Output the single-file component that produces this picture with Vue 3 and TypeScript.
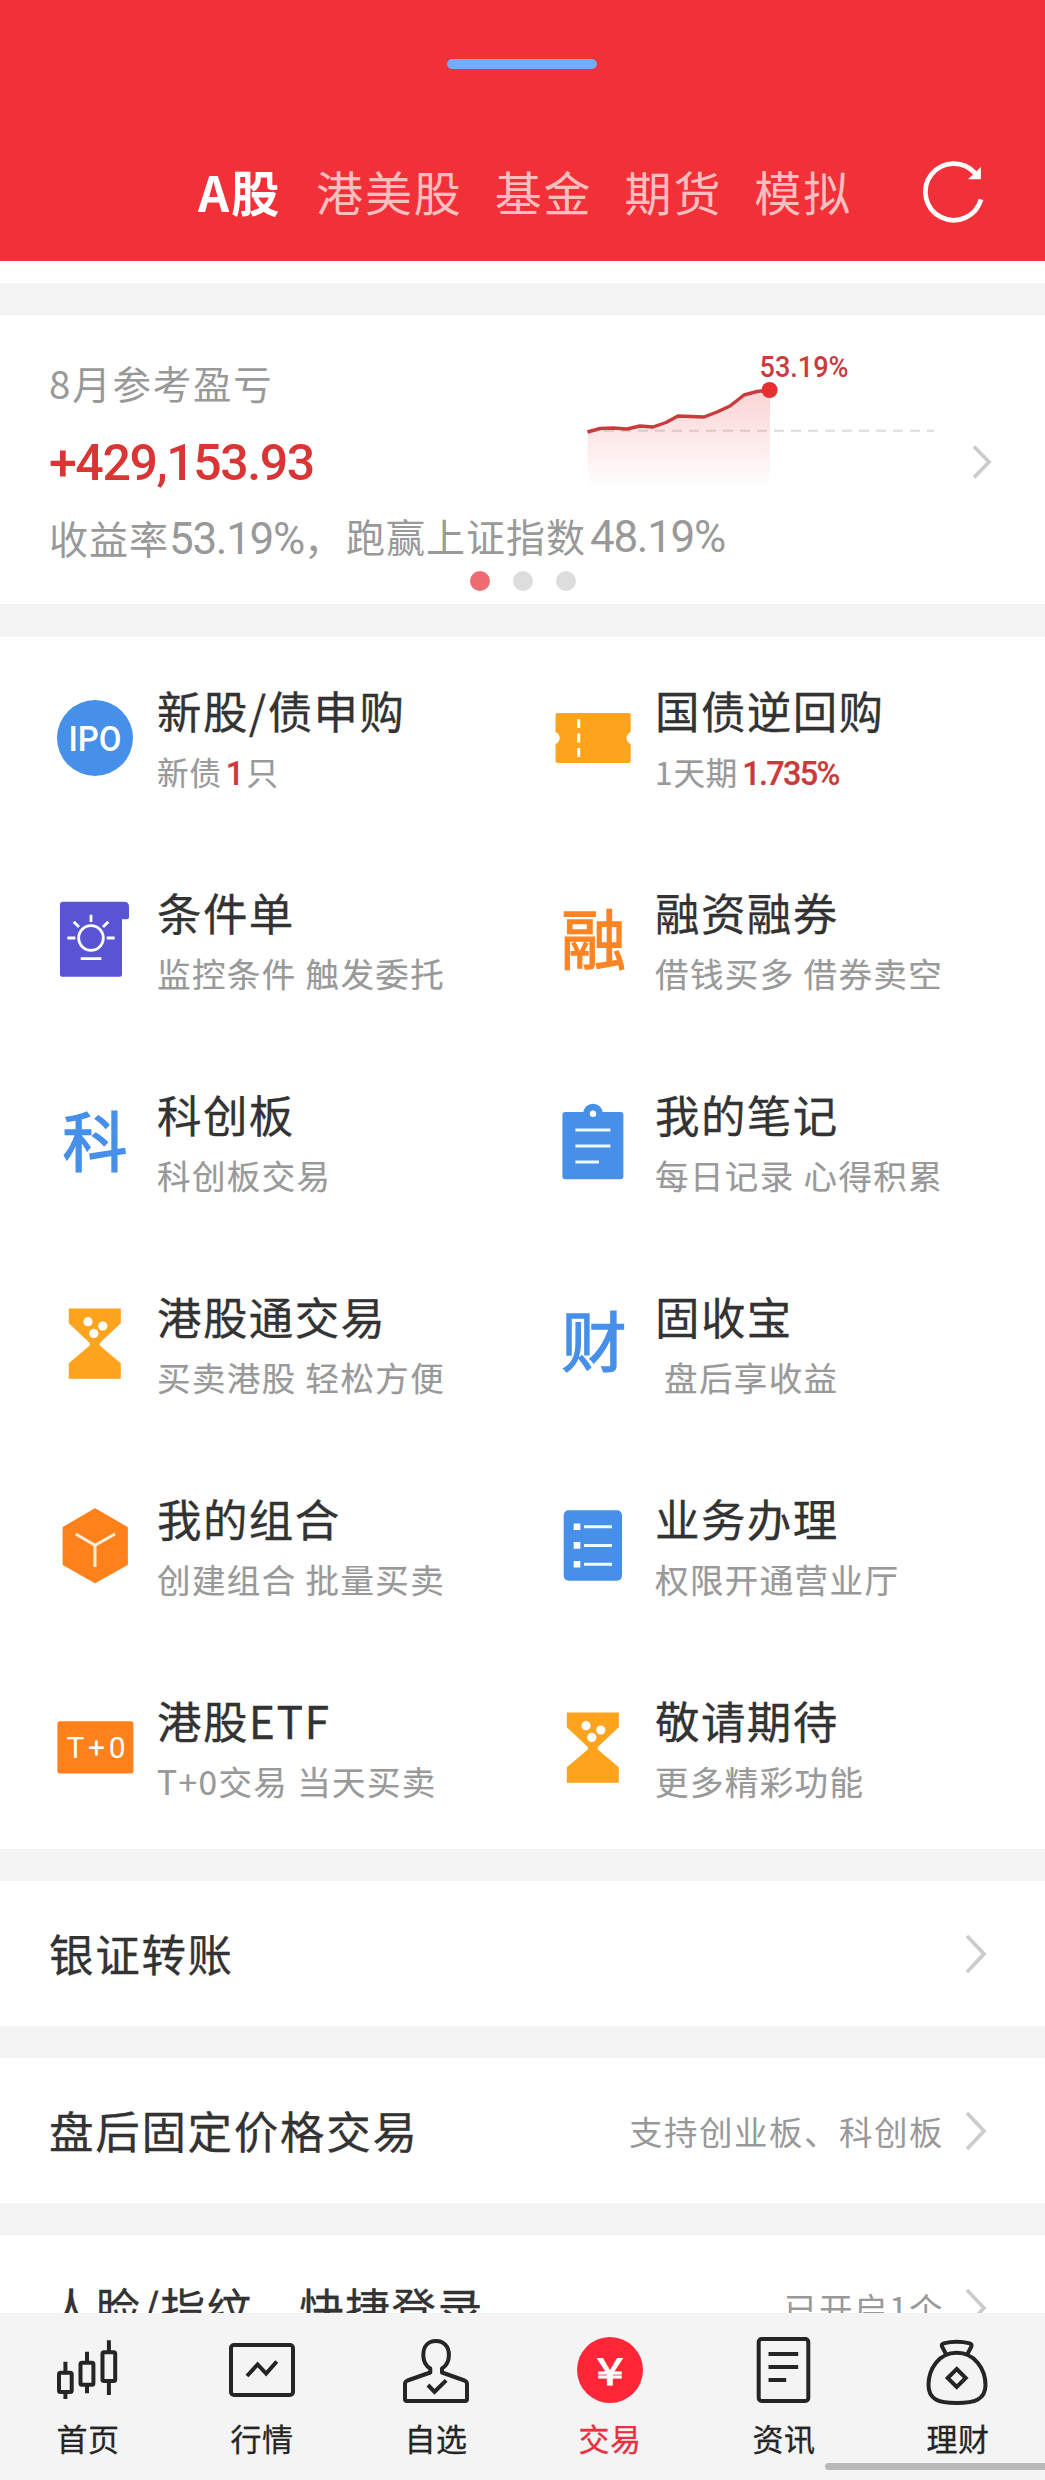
<script setup lang="ts">
interface Entry {
  icon: string
  title: string
  sub: string
  value?: string
  tail?: string
  indent?: boolean
}

interface Row {
  title: string
  note?: string
}

interface NavItem {
  icon: string
  label: string
  active?: boolean
}

const tabs: string[] = ['A股', '港美股', '基金', '期货', '模拟']

const entries: Entry[] = [
  { icon: 'ipo', title: '新股/债申购', sub: '新债', value: '1', tail: '只' },
  { icon: 'ticket', title: '国债逆回购', sub: '1天期', value: '1.735%' },
  { icon: 'bulb', title: '条件单', sub: '监控条件 触发委托' },
  { icon: 'rong', title: '融资融券', sub: '借钱买多 借券卖空' },
  { icon: 'ke', title: '科创板', sub: '科创板交易' },
  { icon: 'note', title: '我的笔记', sub: '每日记录 心得积累' },
  { icon: 'glass', title: '港股通交易', sub: '买卖港股 轻松方便' },
  { icon: 'cai', title: '固收宝', sub: '盘后享收益', indent: true },
  { icon: 'cube', title: '我的组合', sub: '创建组合 批量买卖' },
  { icon: 'list', title: '业务办理', sub: '权限开通营业厅' },
  { icon: 't0', title: '港股ETF', sub: 'T+0交易 当天买卖' },
  { icon: 'glass', title: '敬请期待', sub: '更多精彩功能' },
]

const rows: Row[] = [
  { title: '银证转账' },
  { title: '盘后固定价格交易', note: '支持创业板、科创板' },
  { title: '人脸/指纹、快捷登录', note: '已开启1个' },
]

const nav: NavItem[] = [
  { icon: 'home', label: '首页' },
  { icon: 'quote', label: '行情' },
  { icon: 'self', label: '自选' },
  { icon: 'trade', label: '交易', active: true },
  { icon: 'news', label: '资讯' },
  { icon: 'wealth', label: '理财' },
]

const curve =
  'M1.5 84 L14 80.5 L27 80 L41 81 L54 78 L67 79 L80 74.5 L92 68 L118 69 L131 64 L144 58 L158 47 L171 43.5 L184 42'
</script>

<template>
  <div class="page">
    <header class="top">
      <span class="handle"></span>
      <nav class="tabs">
        <span v-for="(t, i) in tabs" :key="t" class="tab" :class="{ on: i === 0 }">{{ t }}</span>
      </nav>
      <svg class="refresh" viewBox="0 0 70 70" fill="none">
        <path d="M56 15.2 A28.3 28.3 0 1 0 62 41.4" stroke="#fff" stroke-width="4.8" />
        <path d="M61.9 9 V21.2 H49 Z" fill="#fff" />
      </svg>
    </header>

    <section class="profit">
      <div class="figures">
        <p class="label">8月参考盈亏</p>
        <p class="amount">+429,153.93</p>
        <p class="summary">
          <span>收益率<b class="num rate">53.19%</b>，</span><span class="beat">跑赢上证指数<b class="num idx">48.19%</b></span>
        </p>
      </div>
      <svg class="chart" viewBox="0 0 350 160">
        <defs>
          <linearGradient id="area" x1="0" y1="0" x2="0" y2="1">
            <stop offset="0" stop-color="#e93a3a" stop-opacity="0.22" />
            <stop offset="1" stop-color="#e93a3a" stop-opacity="0" />
          </linearGradient>
        </defs>
        <path d="M1 82.8 H348" stroke="#dcdcdc" stroke-width="2" stroke-dasharray="10 7" />
        <path :d="curve + ' V141 H1.5 Z'" fill="url(#area)" />
        <path :d="curve" fill="none" stroke="#cb3a3c" stroke-width="3.4" stroke-linejoin="round" />
        <circle cx="183.6" cy="42" r="8" fill="#e72f31" />
        <text x="173.5" y="29" class="tip" textLength="89" lengthAdjust="spacingAndGlyphs">53.19%</text>
      </svg>
      <svg class="go" viewBox="0 0 20 36"><path d="M2 2.5 L17 18 L2 33.5" /></svg>
      <div class="dots"><i class="on"></i><i></i><i></i></div>
    </section>

    <section class="grid">
      <div v-for="e in entries" :key="e.title" class="cell">
        <svg class="icon" viewBox="0 0 80 80" fill="none">
          <template v-if="e.icon === 'ipo'">
            <circle cx="40" cy="40" r="38" fill="#4690ea" />
            <text x="13.5" y="52.5" class="latin" font-size="35" font-weight="500" textLength="53" lengthAdjust="spacingAndGlyphs">IPO</text>
          </template>
          <template v-else-if="e.icon === 'ticket'">
            <path d="M4.5 15 H75.7 Q77.7 15 77.7 17 V34 Q73.5 36 73.5 40 Q73.5 44 77.7 46 V63 Q77.7 65 75.7 65 H4.5 Q2.5 65 2.5 63 V46 Q6.7 44 6.7 40 Q6.7 36 2.5 34 V17 Q2.5 15 4.5 15 Z" fill="#fea31e" />
            <path d="M25.7 21 v9 M25.7 35.5 v9 M25.7 50 v9" stroke="#fff" stroke-width="3" />
          </template>
          <template v-else-if="e.icon === 'bulb'">
            <path d="M8 1.7 H69 Q74 1.7 74 6.7 V17.3 Q74 19.3 72 19.3 H67 V74.7 Q67 76.7 65 76.7 H7 Q5 76.7 5 74.7 V4.7 Q5 1.7 8 1.7 Z" fill="#5854d3" />
            <g stroke="#fff" stroke-width="2.8">
              <circle cx="36" cy="38" r="12.3" />
              <path d="M36 14.7 v7.3 M18.7 21.7 L24 27 M53.3 21.7 L48 27 M12.4 38 h8 M51.7 38 h8 M25.7 58.7 h20.7" />
            </g>
          </template>
          <template v-else-if="e.icon === 'rong'">
            <text x="40.5" y="64" class="glyph orange">融</text>
          </template>
          <template v-else-if="e.icon === 'ke'">
            <text x="40" y="64" class="glyph blue">科</text>
          </template>
          <template v-else-if="e.icon === 'cai'">
            <text x="41" y="62" class="glyph blue">财</text>
          </template>
          <template v-else-if="e.icon === 'note'">
            <rect x="9.4" y="10" width="61" height="67.3" rx="3" fill="#4690ea" />
            <circle cx="40" cy="11.5" r="9.8" fill="#4690ea" />
            <circle cx="40" cy="11.7" r="3.2" fill="#fff" />
            <path d="M22.4 28 h35 M22.4 44 h35 M22.4 60 h23.6" stroke="#eefaff" stroke-width="3" />
          </template>
          <template v-else-if="e.icon === 'glass'">
            <path d="M13.8 4.5 H65.8 V19.3 L44.8 39 V41.5 L65.8 59.3 V74.7 H13.8 V59.3 L34.8 41.5 V39 L13.8 19.3 Z" fill="#fea31e" />
            <g fill="#fff">
              <circle cx="33" cy="17.7" r="4.6" />
              <circle cx="47.8" cy="22" r="4.6" />
              <circle cx="38.8" cy="29.4" r="4.6" />
            </g>
          </template>
          <template v-else-if="e.icon === 'cube'">
            <path d="M40 3.5 L71.7 21.8 V58.3 L40 76 L8.8 58.3 V21.8 Z" fill="#ff811b" stroke="#ff811b" stroke-width="2.4" stroke-linejoin="round" />
            <path d="M20.7 28 L40 39.3 L60 28 M40 39.3 V61" stroke="#fff0dc" stroke-width="3" />
          </template>
          <template v-else-if="e.icon === 'list'">
            <rect x="10.7" y="4.3" width="58.3" height="70.4" rx="5" fill="#4690ea" />
            <path d="M20.7 20.7 h6.6 M20.7 39.4 h6.6 M20.7 58.3 h6.6" stroke="#fff" stroke-width="6.6" />
            <path d="M31 20.7 h28 M31 39.4 h28 M31 58.3 h28" stroke="#eefaff" stroke-width="3" />
          </template>
          <template v-else>
            <rect x="2.4" y="13.3" width="76" height="52.2" rx="2.5" fill="#ff811b" />
            <text x="11.5" y="49.7" class="latin" font-size="30" textLength="59" lengthAdjust="spacing">T+0</text>
          </template>
        </svg>
        <div class="words">
          <h3>{{ e.title }}</h3>
          <p :class="{ indent: e.indent, quote: e.value }">{{ e.sub }}<b v-if="e.value">{{ e.value }}</b>{{ e.tail }}</p>
        </div>
      </div>
    </section>

    <section v-for="r in rows" :key="r.title" class="row">
      <span class="row-title">{{ r.title }}</span>
      <span class="row-note">{{ r.note }}</span>
      <svg class="chev" viewBox="0 0 24 42"><path d="M3 3 L20 21 L3 39" /></svg>
    </section>

    <footer class="bar">
      <div v-for="n in nav" :key="n.label" class="item" :class="{ active: n.active }">
        <svg class="nav-icon" viewBox="0 0 70 70" fill="none" stroke="#252525" stroke-width="4">
          <template v-if="n.icon === 'home'">
            <rect x="6" y="37.7" width="12.7" height="19.3" rx="1.5" />
            <rect x="27.5" y="27.7" width="12.9" height="22" rx="1.5" />
            <rect x="49.5" y="17.3" width="12.7" height="28.7" rx="1.5" />
            <path d="M12.4 26.7 v10 M12.4 57 v7 M34 16.7 v10 M34 50 v8.3 M55.9 5.3 v11 M55.9 47 v13" />
          </template>
          <template v-else-if="n.icon === 'quote'">
            <rect x="4" y="10" width="62" height="50" rx="3" />
            <path d="M20 41 L30.6 29.5 L39.1 38.5 L49.8 26.5" />
          </template>
          <template v-else-if="n.icon === 'self'">
            <path d="M29.3 33.5 C25 31 22.3 27 22.3 20 C22.3 11 27.5 6 35 6 C42.5 6 47.9 11 47.9 20 C47.9 27 45 31 41 33.5 V37.5 L63.5 45.5 Q66 46.5 66 49 V64 Q66 66 64 66 H6 Q4 66 4 64 V49 Q4 46.5 6.5 45.5 L29.3 37.5 Z" stroke-linejoin="round" />
            <path d="M27 50 L33.5 56.8 L45.2 45.4" />
          </template>
          <template v-else-if="n.icon === 'trade'">
            <circle cx="35" cy="35" r="33" fill="#ff2638" stroke="none" />
            <text x="35" y="49.5" class="yen" textLength="27" lengthAdjust="spacingAndGlyphs">¥</text>
          </template>
          <template v-else-if="n.icon === 'news'">
            <rect x="9.7" y="4" width="49.6" height="62" rx="3" />
            <path d="M19.5 19 h29.7 M19.5 32 h29.7 M19.5 45 h17.7" />
          </template>
          <template v-else>
            <path d="M23.2 19.5 L19 11.5 Q18.3 9.2 20.7 8.4 Q33.7 5.3 46.7 8.4 Q49.1 9.2 48.4 11.5 L44.2 19.5" />
            <path d="M33.7 17.8 C15.7 17.8 5.5 34 5.5 50 C5.5 64.5 15.7 68 33.7 68 C51.7 68 62.5 64.5 62.5 50 C62.5 34 51.7 17.8 33.7 17.8 Z" />
            <path d="M33.7 34 L42.7 43 L33.7 52 L24.7 43 Z" />
          </template>
        </svg>
        <span class="nav-label">{{ n.label }}</span>
      </div>
      <i class="home-line"></i>
    </footer>
  </div>
</template>

<style>
body {
  margin: 0;
  background: #f4f4f4;
}
</style>

<style scoped>
.page {
  position: relative;
  width: 1045px;
  height: 2480px;
  overflow: hidden;
  background: #f4f4f4;
  font-family: 'Noto Sans CJK SC', 'Noto Sans', sans-serif;
  color: #333;
}

p,
h3 {
  margin: 0;
  font-weight: 400;
  white-space: nowrap;
}

svg {
  overflow: visible;
}

.top {
  position: relative;
  box-sizing: border-box;
  height: 283px;
  padding: 151px 61px 0 198px;
  display: flex;
  justify-content: space-between;
  align-items: flex-start;
  background: linear-gradient(#f23038 0 261px, #fff 261px);
}

.handle {
  position: absolute;
  left: 447px;
  top: 59px;
  width: 150px;
  height: 10px;
  border-radius: 5px;
  background: #72abff;
}

.tabs {
  display: flex;
  gap: 32px;
  height: 80px;
  line-height: 80px;
  font-size: 47px;
  letter-spacing: 1.9px;
  color: rgba(255, 255, 255, 0.7);
  white-space: nowrap;
}

.tab.on {
  width: 86px;
  color: #fff;
  font-size: 48.5px;
  font-weight: 700;
  letter-spacing: 2px;
}

.refresh {
  width: 70px;
  height: 70px;
  margin: 7px -5px 0 0;
}

.profit {
  position: relative;
  box-sizing: border-box;
  height: 289px;
  margin: 32px 0 33px;
  padding: 38px 49px 0;
  background: #fff;
}

.label {
  height: 58px;
  line-height: 58px;
  font-size: 38.5px;
  letter-spacing: 1.8px;
  color: #999;
}

.amount {
  height: 98px;
  padding-top: 2px;
  line-height: 100px;
  font-family: Roboto, sans-serif;
  font-size: 50px;
  font-weight: 500;
  letter-spacing: -1.4px;
  color: #d93535;
}

.summary {
  height: 58px;
  margin-top: -3px;
  line-height: 58px;
  font-size: 39px;
  letter-spacing: 1px;
  color: #999;
  display: flex;
}

.beat {
  margin: -2px 0 0 2px;
}

.num {
  font-family: Roboto, sans-serif;
  font-weight: 400;
  font-size: 44px;
  letter-spacing: -1.3px;
}

.idx {
  margin-left: 4px;
}

.chart {
  position: absolute;
  left: 586px;
  top: 33px;
  width: 350px;
  height: 160px;
}

.tip {
  font-family: Roboto, sans-serif;
  font-size: 30px;
  font-weight: 500;
  fill: #cb3a3c;
}

.go {
  position: absolute;
  right: 53px;
  top: 129px;
  width: 20px;
  height: 36px;
}

.go path,
.chev path {
  fill: none;
  stroke: #ccc;
  stroke-width: 3.8;
}

.dots {
  position: absolute;
  left: 469.5px;
  bottom: 13px;
  display: flex;
  gap: 23px;
}

.dots i {
  width: 20px;
  height: 20px;
  border-radius: 50%;
  background: #ddd;
}

.dots i.on {
  background: #ee6c6f;
}

.grid {
  display: grid;
  grid-template-columns: 498px 1fr;
  grid-auto-rows: 202px;
  background: #fff;
}

.cell {
  display: flex;
  align-items: center;
  padding-left: 55px;
}

.icon {
  flex: none;
  width: 80px;
  height: 80px;
}

.latin {
  font-family: Roboto, sans-serif;
  fill: #fff;
}

.glyph {
  font-size: 65px;
  text-anchor: middle;
  stroke-width: 1.4;
}

.glyph.orange {
  fill: #fc8423;
  stroke: #fc8423;
}

.glyph.blue {
  fill: #4690ea;
  stroke: #4690ea;
}

.words {
  margin-left: 22px;
  padding-top: 6px;
}

.words h3 {
  height: 60px;
  line-height: 60px;
  font-size: 44.5px;
  letter-spacing: 1.4px;
  -webkit-text-stroke: 0.3px currentColor;
}

.words p {
  height: 62px;
  line-height: 62px;
  font-size: 33.5px;
  letter-spacing: 1.4px;
  color: #999;
  -webkit-text-stroke: 0.2px currentColor;
}

.words p.indent {
  padding-left: 9px;
}

.words p.quote {
  font-size: 31.5px;
  letter-spacing: 0.9px;
}

.words b {
  margin: 0 4px;
  font-family: Roboto, sans-serif;
  font-size: 32.5px;
  font-weight: 500;
  letter-spacing: -1.7px;
  color: #c93a3a;
}

.row {
  box-sizing: border-box;
  height: 145px;
  margin-top: 32px;
  padding: 0 57px 0 49px;
  display: flex;
  align-items: center;
  background: #fff;
  white-space: nowrap;
}

.row-title {
  flex: 1;
  padding-bottom: 2px;
  font-size: 44.5px;
  line-height: 60px;
  letter-spacing: 1.7px;
  -webkit-text-stroke: 0.3px currentColor;
}

.row-note {
  font-size: 33.5px;
  line-height: 60px;
  letter-spacing: 1.5px;
  color: #999;
}

.chev {
  width: 24px;
  height: 42px;
  margin-left: 20px;
}

.bar {
  position: absolute;
  left: 0;
  right: 0;
  bottom: 0;
  height: 167px;
  padding-left: 1px;
  display: flex;
  background: #f4f4f4;
}

.item {
  flex: 1;
  display: flex;
  flex-direction: column;
  align-items: center;
  padding-top: 22px;
  color: #252525;
}

.item.active {
  color: #e8303f;
}

.nav-icon {
  width: 70px;
  height: 70px;
}

.nav-label {
  margin-top: 13px;
  height: 40px;
  line-height: 40px;
  font-size: 31px;
  letter-spacing: 0.5px;
  -webkit-text-stroke: 0.3px currentColor;
}

.yen {
  font-family: 'Noto Sans CJK SC', sans-serif;
  font-size: 38px;
  fill: #fff;
  stroke: #fff;
  stroke-width: 1;
  text-anchor: middle;
}

.home-line {
  position: absolute;
  left: 825px;
  right: 0;
  top: 150px;
  height: 7px;
  border-radius: 4px 0 0 4px;
  background: #b9b9b9;
}
</style>
